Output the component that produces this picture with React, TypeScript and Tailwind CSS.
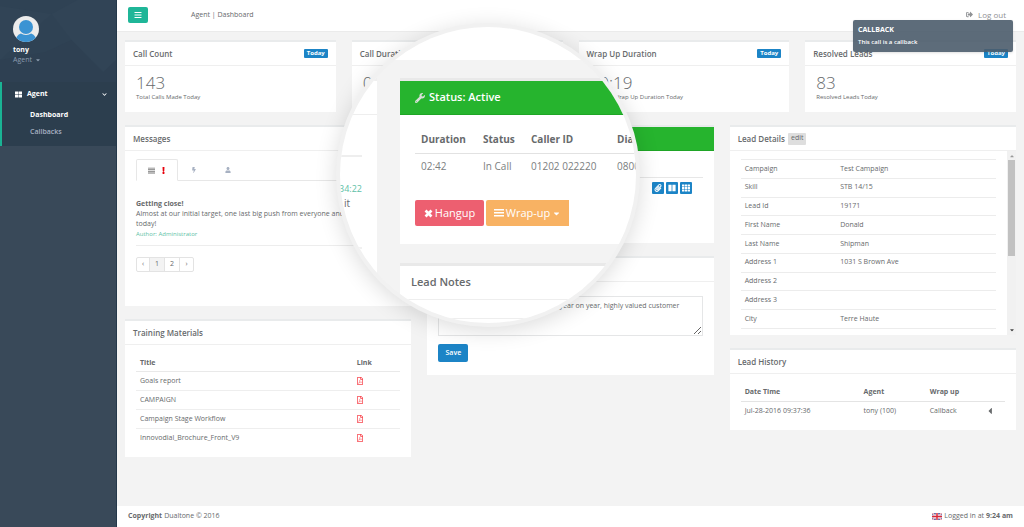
import { useState, type ReactNode } from 'react'
import {
  FaBars,
  FaBolt,
  FaCaretDown,
  FaCaretLeft,
  FaCaretUp,
  FaChevronDown,
  FaExclamation,
  FaPaperclip,
  FaRegFilePdf,
  FaSignOutAlt,
  FaTh,
  FaThLarge,
  FaUser,
  FaWrench,
} from 'react-icons/fa'

const stats = [
  { title: 'Call Count', value: '143', caption: 'Total Calls Made Today' },
  { title: 'Call Duration', value: '02:19', caption: '' },
  { title: 'Wrap Up Duration', value: '00:19', caption: 'Average Wrap Up Duration Today' },
  { title: 'Resolved Leads', value: '83', caption: 'Resolved Leads Today' },
]

const materials = ['Goals report', 'CAMPAIGN', 'Campaign Stage Workflow', 'Innovodial_Brochure_Front_V9']

const leadDetails = [
  ['Campaign', 'Test Campaign'],
  ['Skill', 'STB 14/15'],
  ['Lead Id', '19171'],
  ['First Name', 'Donald'],
  ['Last Name', 'Shipman'],
  ['Address 1', '1031 S Brown Ave'],
  ['Address 2', ''],
  ['Address 3', ''],
  ['City', 'Terre Haute'],
]

function LinesIcon({ className }: { className?: string }) {
  return (
    <svg className={className} viewBox="0 0 10 10" fill="currentColor" aria-hidden="true">
      <path d="M0 1H10V2.300H0ZM0 3.300H10V4.600H0ZM0 5.600H10V6.900H0ZM0 7.900H10V9.200H0Z" />
    </svg>
  )
}

function BarsIcon({ className }: { className?: string }) {
  return (
    <svg className={className} viewBox="0 0 10 10" fill="currentColor" aria-hidden="true">
      <path d="M0 1H10V2.500H0ZM0 4H10V5.500H0ZM0 7H10V8.500H0Z" />
    </svg>
  )
}

function CrossIcon({ className }: { className?: string }) {
  return (
    <svg className={className} viewBox="0 0 10 10" aria-hidden="true">
      <path d="M1.700 1.700L8.300 8.300M8.300 1.700L1.700 8.300" stroke="currentColor" strokeWidth="3" />
    </svg>
  )
}

function ColumnsIcon({ className }: { className?: string }) {
  return (
    <svg className={className} viewBox="0 0 10 10" fill="currentColor" aria-hidden="true">
      <path d="M0.500 1H4.500V9H0.500ZM5.500 1H9.500V9H5.500Z" />
    </svg>
  )
}

function Card({ title, extra, children }: { title?: string; extra?: ReactNode; children: ReactNode }) {
  return (
    <section className="border-t-2 border-[#e9ebec] bg-white">
      <div className="flex h-6 items-center border-b border-[#efefef] px-2">
        <h2 className="text-[8px] font-semibold whitespace-nowrap">{title}</h2>
        {extra}
      </div>
      {children}
    </section>
  )
}

function Sidebar() {
  return (
    <aside className="flex w-[117px] shrink-0 flex-col border-r border-[#24384a] bg-[#394959] text-[7px] text-[#a7b1c2]">
      <div className="relative h-[82px] bg-[#2f4254] pt-4 pl-[13px]">
        <svg className="absolute inset-0 h-full w-full" viewBox="0 0 117 82" preserveAspectRatio="none">
          <path d="M0 6L52 14L78 0H117V82H104L72 40L52 14L0 60Z" fill="#314456" />
          <path d="M72 40L104 72L117 60V82H0V60L46 52Z" fill="#2e4052" />
        </svg>
        <div className="relative">
          <svg className="size-[26px]" viewBox="0 0 26 26">
            <defs>
              <clipPath id="avatar">
                <circle cx="13" cy="13" r="13" />
              </clipPath>
            </defs>
            <g clipPath="url(#avatar)">
              <rect width="26" height="26" fill="#ececec" />
              <path d="M2 26C3 20 6 18 8 17.500H18C20 18 23 20 24 26Z" fill="#3b93d3" />
              <circle cx="13" cy="11" r="8" fill="#ececec" />
              <circle cx="13" cy="11" r="7" fill="#3b93d3" />
            </g>
          </svg>
          <div className="mt-[3px] leading-[10px] font-bold text-white">tony</div>
          <button className="flex items-center gap-[3px] leading-[10px] text-[#8b9bae]">
            Agent <FaCaretDown className="size-[6px]" />
          </button>
        </div>
      </div>
      <nav className="h-16 border-l-2 border-[#1ab394] bg-[#2c3e4e]">
        <a href="#agent" className="flex h-[25px] items-center pr-[9px] pl-[13px] font-bold text-white">
          <FaThLarge className="mr-[5px] size-[7px]" />
          Agent
          <FaChevronDown className="ml-auto size-[5px]" />
        </a>
        <a href="#dashboard" className="flex h-[17px] items-center pl-7 font-bold text-white">
          Dashboard
        </a>
        <a href="#callbacks" className="flex h-[17px] items-center pl-7 font-semibold">
          Callbacks
        </a>
      </nav>
    </aside>
  )
}

function TopBar({ onToggle }: { onToggle: () => void }) {
  return (
    <header className="flex h-8 shrink-0 items-center border-b border-[#ebebeb] bg-white pr-[18px] pb-[2px] pl-[11px]">
      <button
        onClick={onToggle}
        aria-label="Toggle menu"
        className="flex h-4 w-5 items-center justify-center rounded-[2px] bg-[#1fb698] text-white"
      >
        <FaBars className="size-2" />
      </button>
      <span className="ml-[43px] text-[7px] leading-[11px]">Agent | Dashboard</span>
      <a href="#logout" className="ml-auto flex items-center gap-[5px] text-[8px] text-[#8f9194]">
        <FaSignOutAlt className="size-[7px]" />
        Log out
      </a>
    </header>
  )
}

function Messages() {
  return (
    <Card title="Messages">
      <div className="px-[11px] pt-2 pb-[34px] text-[7px]">
        <div className="flex h-[22px] border-b border-[#e7e7e7] text-[#a7b1c2]">
          <button className="flex h-[22px] w-[42px] items-center justify-center gap-[5px] rounded-t-[2px] border border-b-white border-[#e7e7e7] bg-white">
            <LinesIcon className="size-[7px] text-[#777]" />
            <FaExclamation className="size-[7px] text-red-600" />
          </button>
          <button aria-label="Alerts" className="w-8 px-[13px]">
            <FaBolt className="size-[6px]" />
          </button>
          <button aria-label="Personal" className="w-9 px-[15px]">
            <FaUser className="size-[6px]" />
          </button>
        </div>
        <div className="mt-[18px] border-b border-[#ededed] pb-[6px] leading-[10px]">
          <strong className="block">Getting close!</strong>
          <p className="w-[215px]">Almost at our initial target, one last big push from everyone and today!</p>
          <div className="text-[6px] text-[#5ebfa6]">Author: Administrator</div>
        </div>
        <div className="mt-[11px] flex">
          <div className="flex h-[15px] rounded-[2px] border border-[#e3e3e3]">
            <button className="w-3">‹</button>
            <button className="w-4 border-x border-[#e3e3e3] bg-[#f3f3f3]">1</button>
            <button className="w-[15px] border-r border-[#e3e3e3]">2</button>
            <button className="w-[13px]">›</button>
          </div>
        </div>
      </div>
    </Card>
  )
}

function TrainingMaterials() {
  return (
    <Card title="Training Materials">
      <div className="px-[11px] pt-2 pb-[10px]">
        <table className="w-full text-left text-[7px] leading-[10px]">
          <thead>
            <tr className="h-[18px] border-b border-[#e9e9e9]">
              <th className="w-[82%] px-1 pt-[2px] font-bold">Title</th>
              <th className="px-1 pt-[2px] font-bold">Link</th>
            </tr>
          </thead>
          <tbody>
            {materials.map((name) => (
              <tr key={name} className="h-[19px] border-b border-[#eeeeee] last:border-b-0">
                <td className="px-1">{name}</td>
                <td className="px-[3px]">
                  <a href="#pdf" aria-label={name} className="text-[#f8474f]">
                    <FaRegFilePdf className="size-2" />
                  </a>
                </td>
              </tr>
            ))}
          </tbody>
        </table>
      </div>
    </Card>
  )
}

function CallStatus() {
  const tools = [
    { label: 'Attach', icon: FaPaperclip },
    { label: 'Columns', icon: ColumnsIcon },
    { label: 'Keypad', icon: FaTh },
  ]

  return (
    <section className="border-t-2 border-[#e9ebec] bg-white">
      <div className="h-6 border-b border-[#1fa526] bg-[#26b42e]" />
      <div className="px-[11px] pb-[49px]">
        <div className="h-[27px] border-b border-[#e7e7e7]" />
        <div className="mt-1 flex justify-end gap-[2px] pr-[11px]">
          {tools.map(({ label, icon: Icon }) => (
            <button
              key={label}
              aria-label={label}
              className="flex h-3 w-3 items-center justify-center rounded-[1px] bg-[#1c84c6] text-white"
            >
              <Icon className="size-2" />
            </button>
          ))}
        </div>
      </div>
    </section>
  )
}

function LeadNotes() {
  return (
    <Card>
      <div className="px-[11px] pt-[14px] pb-[13px]">
        <textarea
          aria-label="Lead Notes"
          className="block h-10 w-full border border-[#e5e6e7] px-[6px] py-1 text-[7px] leading-[10px]"
          defaultValue="Customer has increased spending, year on year, highly valued customer"
        />
        <button className="mt-2 h-[18px] w-[30px] rounded-[2px] bg-[#1c84c6] text-[7px] font-semibold text-white">
          Save
        </button>
      </div>
    </Card>
  )
}

function LeadDetails() {
  return (
    <Card
      title="Lead Details"
      extra={
        <button className="ml-[3px] flex h-3 items-center rounded-[1px] bg-[#dedede] px-[3px] text-[7px]">edit</button>
      }
    >
      <div className="flex h-[184px]">
        <div className="flex-1 overflow-hidden px-[11px] pt-2">
          <table className="h-[170px] w-full text-left text-[7px]">
            <tbody>
              {leadDetails.map(([label, value]) => (
                <tr key={label} className="border-y border-[#ececec]">
                  <th className="w-[37%] px-1 font-normal">{label}</th>
                  <td className="px-[5px]">{value}</td>
                </tr>
              ))}
            </tbody>
          </table>
        </div>
        <div className="flex w-[9px] flex-col items-center bg-[#f1f1f1] py-[2px]">
          <FaCaretUp className="size-[6px] text-[#999]" />
          <div className="mt-[1px] h-24 w-[7px] bg-[#c1c1c1]" />
          <FaCaretDown className="mt-auto size-[6px] text-[#444]" />
        </div>
      </div>
    </Card>
  )
}

function LeadHistory() {
  return (
    <Card title="Lead History">
      <div className="px-[11px] pt-2 pb-[10px]">
        <table className="w-full text-left text-[7px] leading-[10px]">
          <thead>
            <tr className="h-[19px] border-b border-[#e4e4e4]">
              <th className="w-[45%] px-1 pt-[2px] font-bold">Date Time</th>
              <th className="w-[25%] px-1 pt-[2px] font-bold">Agent</th>
              <th className="px-1 pt-[2px] font-bold">Wrap up</th>
              <th className="w-5" />
            </tr>
          </thead>
          <tbody>
            <tr className="h-[19px]">
              <td className="px-1">Jul-28-2016 09:37:36</td>
              <td className="px-1">tony (100)</td>
              <td className="px-1">Callback</td>
              <td>
                <FaCaretLeft className="size-[10px]" />
              </td>
            </tr>
          </tbody>
        </table>
      </div>
    </Card>
  )
}

// Magnified view of the active call, floats over the dashboard
function CallLens() {
  return (
    <div className="absolute top-[23px] left-[219px] size-[304px] overflow-hidden rounded-full border-4 border-[#f1f1f1] bg-[#f3f3f3] shadow-[0_4px_22px_rgba(0,0,0,0.14)]">
      <div className="h-[33px] bg-white" />
      <div className="mt-[18px] flex">
        <div className="h-[245px] w-[37px] shrink-0 border-t-[3px] border-[#efefef] bg-white">
          <div className="h-[34px] border-b border-[#eeeeee]" />
          <div className="mr-[15px] h-[42px] border-b-2 border-[#eeeeee]" />
          <div className="mr-[15px] h-[92px] border-b-2 border-[#f1f1f1] pt-6 text-[10px] leading-[15px]">
            <div className="flex justify-end text-[9px] leading-[15px] text-[#5ebfa6]">34:22</div>
            <div className="pl-1">it</div>
          </div>
        </div>
        <div className="ml-[23px] w-[300px] shrink-0">
          <section className="border-t-[3px] border-[#e9e9e9] bg-white pb-[18px]">
            <div className="flex h-[34px] items-center gap-1 border-b border-[#1fa526] bg-[#26b42e] pl-[15px] text-[11px] text-white">
              <FaWrench className="size-[10px] text-[#d5dfd5]" />
              <h2 className="font-semibold">Status: Active</h2>
            </div>
            <div className="pt-3 pl-[15px]">
              <table className="w-[280px] table-fixed text-left text-[10px]">
                <thead>
                  <tr className="h-[26px] border-b border-[#e2e2e2]">
                    <th className="w-[62px] pl-[6px] font-bold">Duration</th>
                    <th className="w-12 pl-[6px] font-bold">Status</th>
                    <th className="w-[86px] pl-[6px] font-bold">Caller ID</th>
                    <th className="pl-[6px] font-bold">Dia</th>
                  </tr>
                </thead>
                <tbody>
                  <tr className="h-[27px] text-[#7b7e80]">
                    <td className="pl-[6px]">02:42</td>
                    <td className="pl-[6px]">In Call</td>
                    <td className="pl-[6px]">01202 022220</td>
                    <td className="pl-[6px]">0800</td>
                  </tr>
                </tbody>
              </table>
              <div className="mt-5 flex gap-[2px] text-[11px] text-white">
                <button className="flex h-[26px] w-[69px] items-center justify-center gap-[2px] rounded-[2px] bg-[#ed5f70]">
                  <CrossIcon className="size-[9px]" />
                  Hangup
                </button>
                <button className="flex h-[26px] w-[83px] items-center justify-center gap-[2px] rounded-l-[2px] bg-[#f8b263]">
                  <BarsIcon className="size-[10px]" />
                  Wrap-up
                  <FaCaretDown className="size-[9px]" />
                </button>
              </div>
            </div>
          </section>
          <section className="mt-[19px] h-[70px] border-t-[3px] border-[#e9e9e9] bg-white">
            <h2 className="flex h-[34px] items-center border-b border-[#eeeeee] pl-[11px] text-[11px] font-semibold">
              Lead Notes
            </h2>
            <div className="mt-[18px] ml-[15px] border-t border-[#eeeeee]" />
          </section>
        </div>
      </div>
    </div>
  )
}

function Footer() {
  return (
    <footer className="flex h-[21px] shrink-0 items-center bg-white px-[11px] text-[7px]">
      <strong className="mr-[2px]">Copyright</strong> Dualtone © 2016
      <span className="ml-auto flex items-center">
        <svg className="mr-[2px] h-[7px] w-[10px]" viewBox="0 0 20 14">
          <rect width="20" height="14" fill="#3b4f9b" />
          <path d="M0 0L20 14M20 0L0 14" stroke="#fff" strokeWidth="3" />
          <path d="M0 0L20 14M20 0L0 14" stroke="#d8283a" strokeWidth="1" />
          <path d="M10 0V14M0 7H20" stroke="#fff" strokeWidth="5" />
          <path d="M10 0V14M0 7H20" stroke="#d8283a" strokeWidth="3" />
        </svg>
        Logged in at <strong className="ml-[2px]">9:24 am</strong>
      </span>
    </footer>
  )
}

export default function App() {
  const [menuOpen, setMenuOpen] = useState(true)

  return (
    <div className="flex min-h-screen bg-[#f3f3f3] font-['Open_Sans',sans-serif] text-[#676a6c]">
      {menuOpen && <Sidebar />}
      <div className="relative flex min-w-0 flex-1 flex-col">
        <TopBar onToggle={() => setMenuOpen(!menuOpen)} />
        <main className="flex flex-1 flex-col gap-[13px] p-2">
          <div className="grid grid-cols-4 gap-4">
            {stats.map((stat) => (
              <Card
                key={stat.title}
                title={stat.title}
                extra={
                  <span className="ml-auto flex h-[9px] w-6 items-center justify-center rounded-[1px] bg-[#1c84c6] text-[6px] font-bold text-white">
                    Today
                  </span>
                }
              >
                <div className="h-[46px] px-[11px] pt-2">
                  <div className="text-[17px] leading-[18px] font-light">{stat.value}</div>
                  <div className="text-[6px] leading-[10px]">{stat.caption}</div>
                </div>
              </Card>
            ))}
          </div>
          <div className="grid grid-cols-3 items-start gap-4">
            <div className="flex flex-col gap-[13px]">
              <Messages />
              <TrainingMaterials />
            </div>
            <div className="flex flex-col gap-[13px]">
              <CallStatus />
              <LeadNotes />
            </div>
            <div className="flex flex-col gap-[13px]">
              <LeadDetails />
              <LeadHistory />
            </div>
          </div>
        </main>
        <Footer />
        <CallLens />
        <div
          role="alert"
          className="absolute top-5 right-[11px] h-8 w-40 rounded-[2px] bg-[#4b5c6c]/90 px-[5px] pt-1 text-white shadow-sm"
        >
          <div className="text-[7px] leading-[12px] font-bold">CALLBACK</div>
          <div className="text-[6px] leading-[12px] font-semibold">This call is a callback</div>
        </div>
      </div>
    </div>
  )
}
